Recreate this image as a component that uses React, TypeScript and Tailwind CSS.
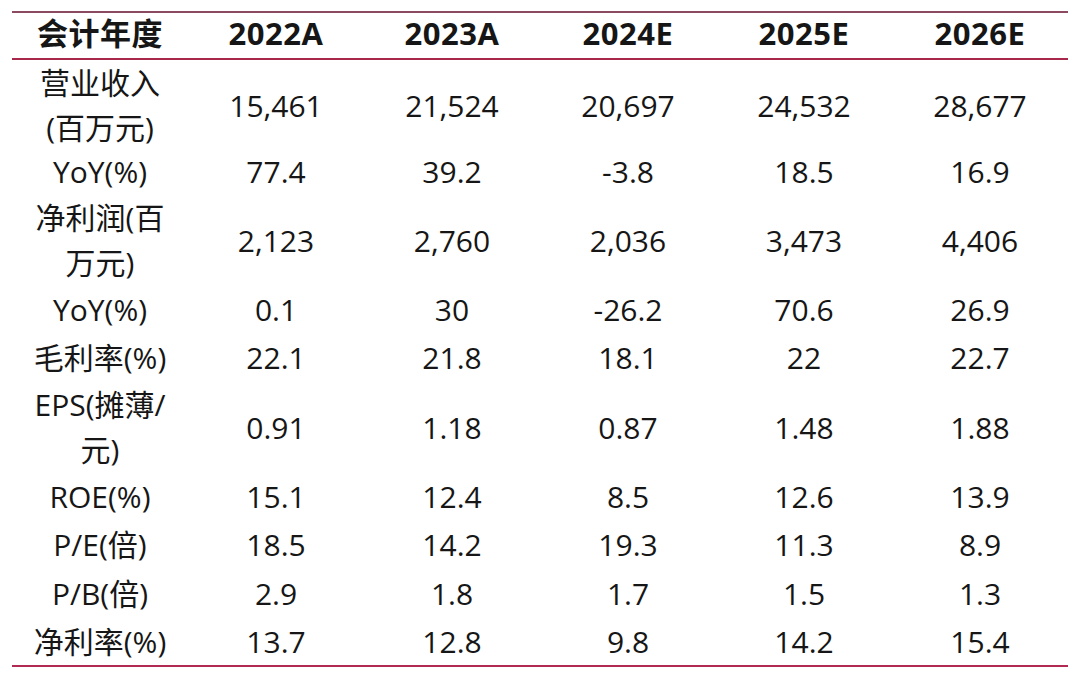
import React from "react";

type Row = { label: React.ReactNode; vals: string[]; h: string };

const rows: Row[] = [
  { label: <>营业收入<br />(百万元)</>, vals: ["15,461", "21,524", "20,697", "24,532", "28,677"], h: "h-[88px]" },
  { label: "YoY(%)", vals: ["77.4", "39.2", "-3.8", "18.5", "16.9"], h: "h-[47px]" },
  { label: <>净利润(百<br />万元)</>, vals: ["2,123", "2,760", "2,036", "3,473", "4,406"], h: "h-[90px]" },
  { label: "YoY(%)", vals: ["0.1", "30", "-26.2", "70.6", "26.9"], h: "h-[48px]" },
  { label: "毛利率(%)", vals: ["22.1", "21.8", "18.1", "22", "22.7"], h: "h-[48px]" },
  { label: <>EPS(摊薄/<br />元)</>, vals: ["0.91", "1.18", "0.87", "1.48", "1.88"], h: "h-[92px]" },
  { label: "ROE(%)", vals: ["15.1", "12.4", "8.5", "12.6", "13.9"], h: "h-[47px]" },
  { label: "P/E(倍)", vals: ["18.5", "14.2", "19.3", "11.3", "8.9"], h: "h-[49px]" },
  { label: "P/B(倍)", vals: ["2.9", "1.8", "1.7", "1.5", "1.3"], h: "h-[48px]" },
  { label: "净利率(%)", vals: ["13.7", "12.8", "9.8", "14.2", "15.4"], h: "h-[48px]" },
];

const headers = ["会计年度", "2022A", "2023A", "2024E", "2025E", "2026E"];

export default function App() {
  return (
    <div
      className="w-[1080px] h-[681px] bg-white text-[#161616] text-[30px]"
      style={{ fontFamily: '"Open Sans", "Noto Sans CJK SC", sans-serif' }}
    >
      <div className="ml-[12px] pt-[11px] w-[1056px]">
        <div className="border-t-2 border-[#8c4a60]" />
        <div className="grid grid-cols-6 h-[47px] items-center font-bold text-[31px] tracking-[0.5px] border-b-2 border-[#a8284c]">
          {headers.map((h) => (
            <div key={h} className="text-center leading-none pb-[4px]">{h}</div>
          ))}
        </div>
        {rows.map((r, i) => (
          <div key={i} className={`grid grid-cols-6 items-center ${r.h}`}>
            <div className="text-center leading-[45px]">{r.label}</div>
            {r.vals.map((v, j) => (
              <div key={j} className="text-center leading-[45px]">{v}</div>
            ))}
          </div>
        ))}
        <div className="border-t-2 border-[#b02a52]" />
      </div>
    </div>
  );
}
